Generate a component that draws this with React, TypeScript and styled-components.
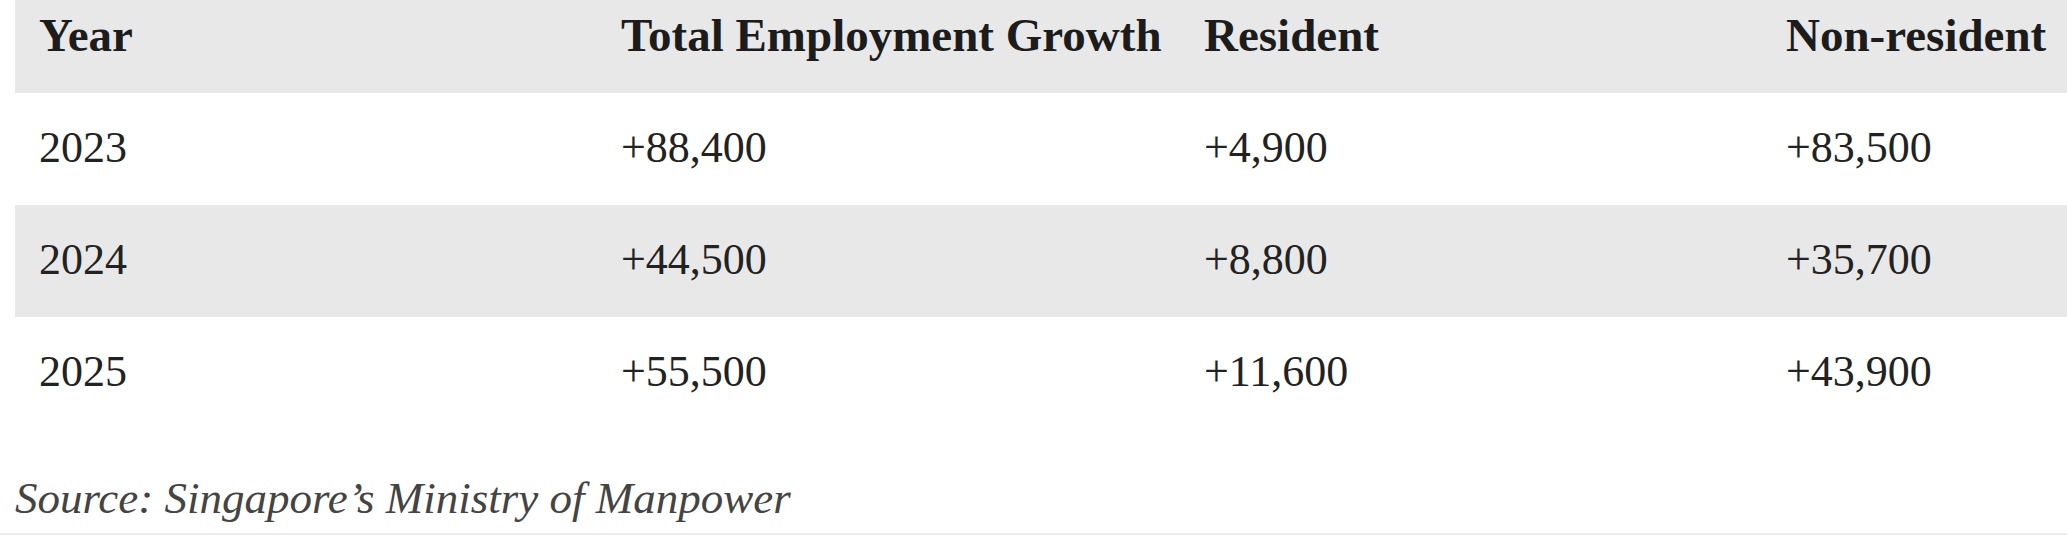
import React from "react";
import styled, { createGlobalStyle } from "styled-components";

const GlobalStyle = createGlobalStyle`
  html, body {
    margin: 0;
    padding: 0;
    background: #ffffff;
    overflow: hidden;
  }
  body {
    font-family: "Liberation Serif", "Times New Roman", serif;
    color: #222222;
  }
`;

const Figure = styled.figure`
  margin: 0;
  padding: 0 0 12px 15px;
  border-bottom: 2px solid #ececec;
  width: 2052px;
`;

const Table = styled.table`
  width: 2052px;
  border-collapse: collapse;
  table-layout: fixed;
`;

const Col = styled.col<{ $w?: number }>`
  width: ${(p) => (p.$w ? `${p.$w}px` : "auto")};
`;

const HeadRow = styled.tr`
  background: #e8e8e8;
`;

const HeadCell = styled.th`
  text-align: left;
  font-weight: 700;
  font-size: 47px;
  line-height: 47px;
  padding: 12px 0 34px 24px;
  color: #1c1c1c;
  white-space: nowrap;
`;

const Row = styled.tr<{ $shaded: boolean }>`
  background: ${(p) => (p.$shaded ? "#e8e8e8" : "#ffffff")};
`;

const Cell = styled.td`
  font-size: 44px;
  line-height: 44px;
  padding: 33px 0 35px 24px;
  color: #222222;
  white-space: nowrap;
`;

const Caption = styled.figcaption`
  margin-top: 47px;
  font-style: italic;
  font-size: 45px;
  line-height: 45px;
  color: #444444;
`;

const rows = [
  ["2023", "+88,400", "+4,900", "+83,500"],
  ["2024", "+44,500", "+8,800", "+35,700"],
  ["2025", "+55,500", "+11,600", "+43,900"],
];

export default function App() {
  return (
    <>
      <GlobalStyle />
      <Figure>
        <Table>
          <colgroup>
            <Col $w={582} />
            <Col $w={583} />
            <Col $w={582} />
            <Col />
          </colgroup>
          <thead>
            <HeadRow>
              <HeadCell>Year</HeadCell>
              <HeadCell>Total Employment Growth</HeadCell>
              <HeadCell>Resident</HeadCell>
              <HeadCell>Non-resident</HeadCell>
            </HeadRow>
          </thead>
          <tbody>
            {rows.map((r, i) => (
              <Row key={r[0]} $shaded={i % 2 === 1}>
                {r.map((c, j) => (
                  <Cell key={j}>{c}</Cell>
                ))}
              </Row>
            ))}
          </tbody>
        </Table>
        <Caption>Source: Singapore’s Ministry of Manpower</Caption>
      </Figure>
    </>
  );
}
